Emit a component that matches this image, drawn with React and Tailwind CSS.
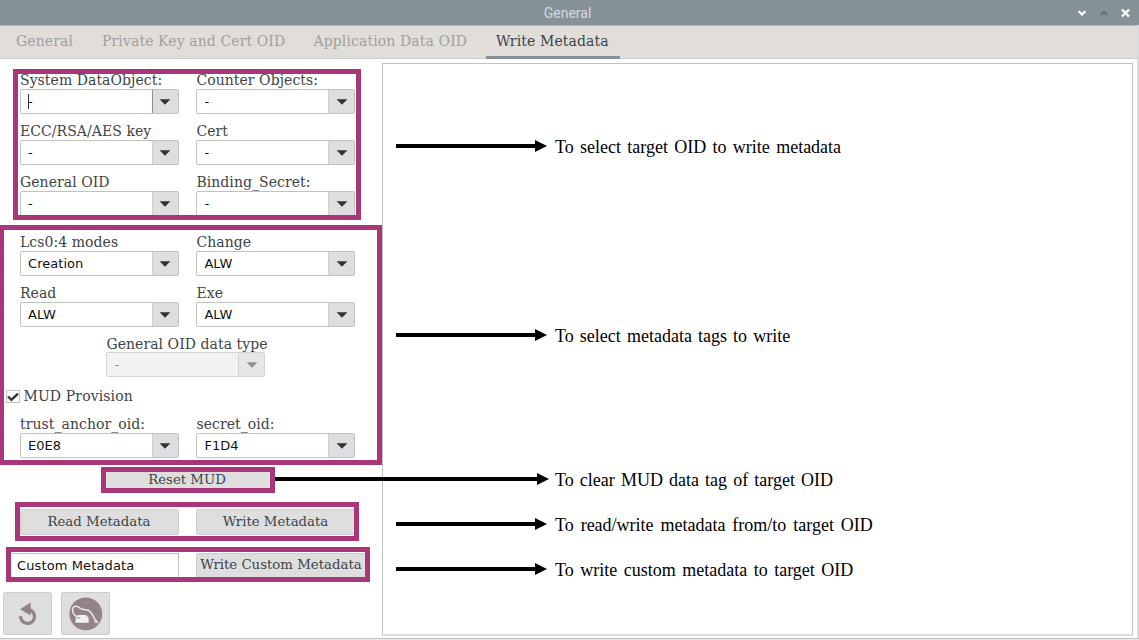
import React from "react";

const serif = "font-['DejaVu_Serif',serif]";
const sans = "font-['DejaVu_Sans',sans-serif]";

function Combo({ value, disabled = false, focused = false }) {
  return (
    <div
      className={`flex h-[25px] w-[159px] shrink-0 overflow-hidden rounded-[2px] border ${
        disabled ? "border-[#d3d3d3] bg-[#f2f2f2]" : "border-[#c0c2c0] bg-white"
      }`}
    >
      <div
        className={`relative flex flex-1 items-center whitespace-pre pb-px pl-[7px] text-[13px] leading-none tracking-[0.05px] ${sans} ${
          disabled ? "text-[#8b8e8f]" : "text-[#111]"
        }`}
      >
        {focused && <span className="absolute left-[7px] top-[4px] h-[15px] w-px bg-[#333]" />}
        <span>{value}</span>
      </div>
      <div
        className={`flex w-[26px] items-center justify-center border-l pr-[0.4px] ${
          disabled ? "border-[#d3d3d3] bg-[#e6e6e6]" : focused ? "border-[#87939a] bg-[#dedede]" : "border-[#cfcfcf] bg-[#dedede]"
        }`}
      >
        <svg width="12" height="6" viewBox="0 0 12 6">
          <path d="M0.6 0.2H11.4L6 5.8Z" fill={disabled ? "#8d9091" : "#2e3436"} />
        </svg>
      </div>
    </div>
  );
}

function Field({ label, leading = "leading-[13px]", ...rest }) {
  return (
    <div className="w-[159px]">
      <div className={`h-[15px] whitespace-nowrap text-[14px] tracking-[0.06px] text-[#3d4447] ${leading} ${serif}`}>{label}</div>
      <Combo {...rest} />
    </div>
  );
}

function Button({ children, className = "" }) {
  return (
    <div
      className={`flex items-center justify-center whitespace-nowrap rounded-[2px] border border-[#cdcdcd] bg-[#dedede] text-[13.3px] leading-none text-[#3d4447] ${serif} ${className}`}
    >
      {children}
    </div>
  );
}

function Note({ text, className = "", line = "w-[139px]", gap = "pl-[8px]", spacing = "" }) {
  return (
    <div className={`absolute flex h-[22px] items-center ${className}`}>
      <div className={`h-[4px] bg-black ${line}`} />
      <svg width="12" height="12" viewBox="0 0 12 12" className="shrink-0">
        <path d="M0 0L12 6L0 12Z" fill="#000" />
      </svg>
      <span
        className={`absolute left-full top-px whitespace-nowrap font-['Liberation_Serif',serif] text-[18px] leading-[22px] text-black ${gap} ${spacing}`}
      >
        {text}
      </span>
    </div>
  );
}

export default function App() {
  return (
    <div className="relative flex h-[640px] w-[1139px] flex-col overflow-hidden bg-white">
      <header className="flex h-[25px] shrink-0 items-center bg-[#859299]">
        <div className="w-[135px]" />
        <div className="flex-1 pr-[4px] text-center font-['Roboto',sans-serif] text-[14px] leading-none text-[#d5dadd]">General</div>
        <div className="flex w-[135px] items-center justify-end gap-[12px] pr-[9px]">
          <svg width="10" height="10" viewBox="0 0 10 10" fill="none" stroke="#fff" strokeWidth="2.2">
            <path d="M1.5 3.2L5 6.4L8.5 3.2" />
          </svg>
          <svg width="10" height="10" viewBox="0 0 10 10" fill="none" stroke="#6b6e6e" strokeWidth="2.2">
            <path d="M1.5 7L5 3.8L8.5 7" />
          </svg>
          <svg width="9" height="10" viewBox="0 0 9 10" fill="none" stroke="#fff" strokeWidth="2.4">
            <path d="M1 1.5L8 8.5M8 1.5L1 8.5" />
          </svg>
        </div>
      </header>

      <nav className={`flex h-[34px] w-[1138px] shrink-0 border-b border-t border-b-[#cfccc8] border-t-[#b8b9b7] border-r border-r-[#cfccc8] bg-[#e1deda] text-[14px] leading-[31px] tracking-[0.11px] text-[#a0a09e] ${serif}`}>
        <div className="w-[91px] whitespace-nowrap pl-4">General</div>
        <div className="w-[212px] whitespace-nowrap pl-[11px]">Private Key and Cert OID</div>
        <div className="w-[183px] whitespace-nowrap pl-[10.5px]">Application Data OID</div>
        <div className="h-[33px] w-[134px] whitespace-nowrap border-b-[3px] border-[#859299] pl-[10px] text-[#3d4447]">Write Metadata</div>
      </nav>

      <main className="flex flex-1">
        <aside className="flex w-[382px] shrink-0 flex-col">
          <section className="ml-[13px] mt-[10px] h-[151px] w-[348px] overflow-hidden border-[5px] border-[#a93678] pl-[2px]">
            <div className="grid grid-cols-[159px_159px] gap-x-[17.4px] gap-y-[11px]">
              <Field label="System DataObject:" value="-" focused />
              <Field label="Counter Objects:" value="-" />
              <Field label="ECC/RSA/AES key" value="-" />
              <Field label="Cert" value="-" />
              <Field label="General OID" value="-" />
              <Field label="Binding_Secret:" value="-" />
            </div>
          </section>

          <section className="mt-[5px] h-[240px] w-[382px] border-[5px] border-l-4 border-[#a93678] pt-[6px]">
            <div className="grid grid-cols-[159px_159px] gap-x-[17.4px] gap-y-[11px] pl-4">
              <Field label="Lcs0:4 modes" value="Creation" />
              <Field label="Change" value="ALW" />
              <Field label="Read" value="ALW" />
              <Field label="Exe" value="ALW" />
            </div>
            <div className="mt-[10px] pl-[102.4px]">
              <Field label="General OID data type" value="-" disabled leading="leading-[15px]" />
            </div>
            <div className="mt-[11px] flex h-[17px] items-center pl-[2px]">
              <div className="flex h-[13px] w-[14px] items-center justify-center border border-[#c0c2c0] bg-white">
                <svg width="12" height="10" viewBox="0 0 12 10" fill="none" stroke="#2e3436" strokeWidth="2.4">
                  <path d="M1 4.5L4.4 7.8L11 1.6" />
                </svg>
              </div>
              <span className={`ml-[3.5px] pb-px text-[14px] leading-none tracking-[0.12px] text-[#3d4447] ${serif}`}>MUD Provision</span>
            </div>
            <div className="mt-[13px] grid grid-cols-[159px_159px] gap-x-[17.4px] pl-4">
              <Field label="trust_anchor_oid:" value="E0E8" />
              <Field label="secret_oid:" value="F1D4" />
            </div>
          </section>

          <section className="ml-[101px] mt-[2px] h-[26px] w-[174px] border-[5px] border-[#a93678]">
            <Button className="h-[16px] border-0 pb-px pr-[2px]">Reset MUD</Button>
          </section>

          <section className="ml-[15px] mt-[9px] flex h-[39px] w-[344px] gap-[17px] overflow-hidden border-[5px] border-[#a93678] pt-[2px]">
            <Button className="h-[26px] w-[159px] shrink-0 pr-px">Read Metadata</Button>
            <Button className="h-[26px] w-[159px] shrink-0">Write Metadata</Button>
          </section>

          <section className="ml-[6px] mt-[6px] flex h-[35px] w-[364px] gap-[17px] overflow-hidden border-[5px] border-[#a93678] pt-px">
            <div className={`flex h-[25px] w-[168px] shrink-0 items-center border-r border-t border-[#c0c2c0] pb-px pl-[6px] text-[13px] leading-none tracking-[0.12px] text-[#111] ${sans}`}>
              Custom Metadata
            </div>
            <Button className="h-[26px] w-[170px] shrink-0 pb-[2px]">Write Custom Metadata</Button>
          </section>

          <div className="ml-[3px] mt-[10px] flex gap-[9px]">
            <Button className="h-[43px] w-[49px]">
              <svg width="20" height="24" viewBox="0 0 20 24">
                <path d="M11 7.6A7 7 0 1 1 2.6 14.2" fill="none" stroke="#938287" strokeWidth="3.3" />
                <path d="M2 7.2L12.6 0.6V13.6Z" fill="#938287" />
              </svg>
            </Button>
            <Button className="h-[43px] w-[49px]">
              <svg width="34" height="34" viewBox="0 0 34 34">
                <circle cx="16.8" cy="16.9" r="16.4" fill="#938287" />
                <path
                  d="M7.5 19.5C4 17.5 2.8 13.5 4 10.8C5 8.8 8 8.8 10 10.5C12.5 12.8 16 12.4 19 13.3C23 14.6 24 20 27 24"
                  fill="none"
                  stroke="#ebe8e9"
                  strokeWidth="1.5"
                />
                <path d="M24.8 25.2L27.2 22.8L30 26.2Z" fill="#ebe8e9" />
                <path d="M6.8 20.4L8.8 18H17L19.6 20.8V25.8H6.4Z" fill="#f2f0f1" />
                <path d="M8 20.9H11.2" stroke="#938287" strokeWidth="0.9" />
              </svg>
            </Button>
          </div>
        </aside>

        <section className="mt-[4px] h-[573px] w-[751px] border border-b-2 border-[#c0c2c0] border-b-[#dcdcdc] bg-white" />
      </main>

      <div className="absolute bottom-0 right-0 top-[25px] w-[2px] bg-[#d9d9d9]" />
      <div className="absolute bottom-0 left-0 h-[2px] w-full border-t border-[#c4c4c4] bg-[#e8e8e6]" />

      <Note className="left-[396px] top-[135px]" spacing="[word-spacing:1.8px]" text="To select target OID to write metadata" />
      <Note className="left-[396px] top-[324px]" spacing="[word-spacing:1.6px]" text="To select metadata tags to write" />
      <Note className="left-[275px] top-[468px]" line="w-[262px]" gap="pl-[6px]" spacing="[word-spacing:1.6px]" text="To clear MUD data tag of target OID" />
      <Note className="left-[396px] top-[513px]" spacing="[word-spacing:2.4px]" text="To read/write metadata from/to target OID" />
      <Note className="left-[396px] top-[558px]" spacing="[word-spacing:2px]" text="To write custom metadata to target OID" />
    </div>
  );
}
